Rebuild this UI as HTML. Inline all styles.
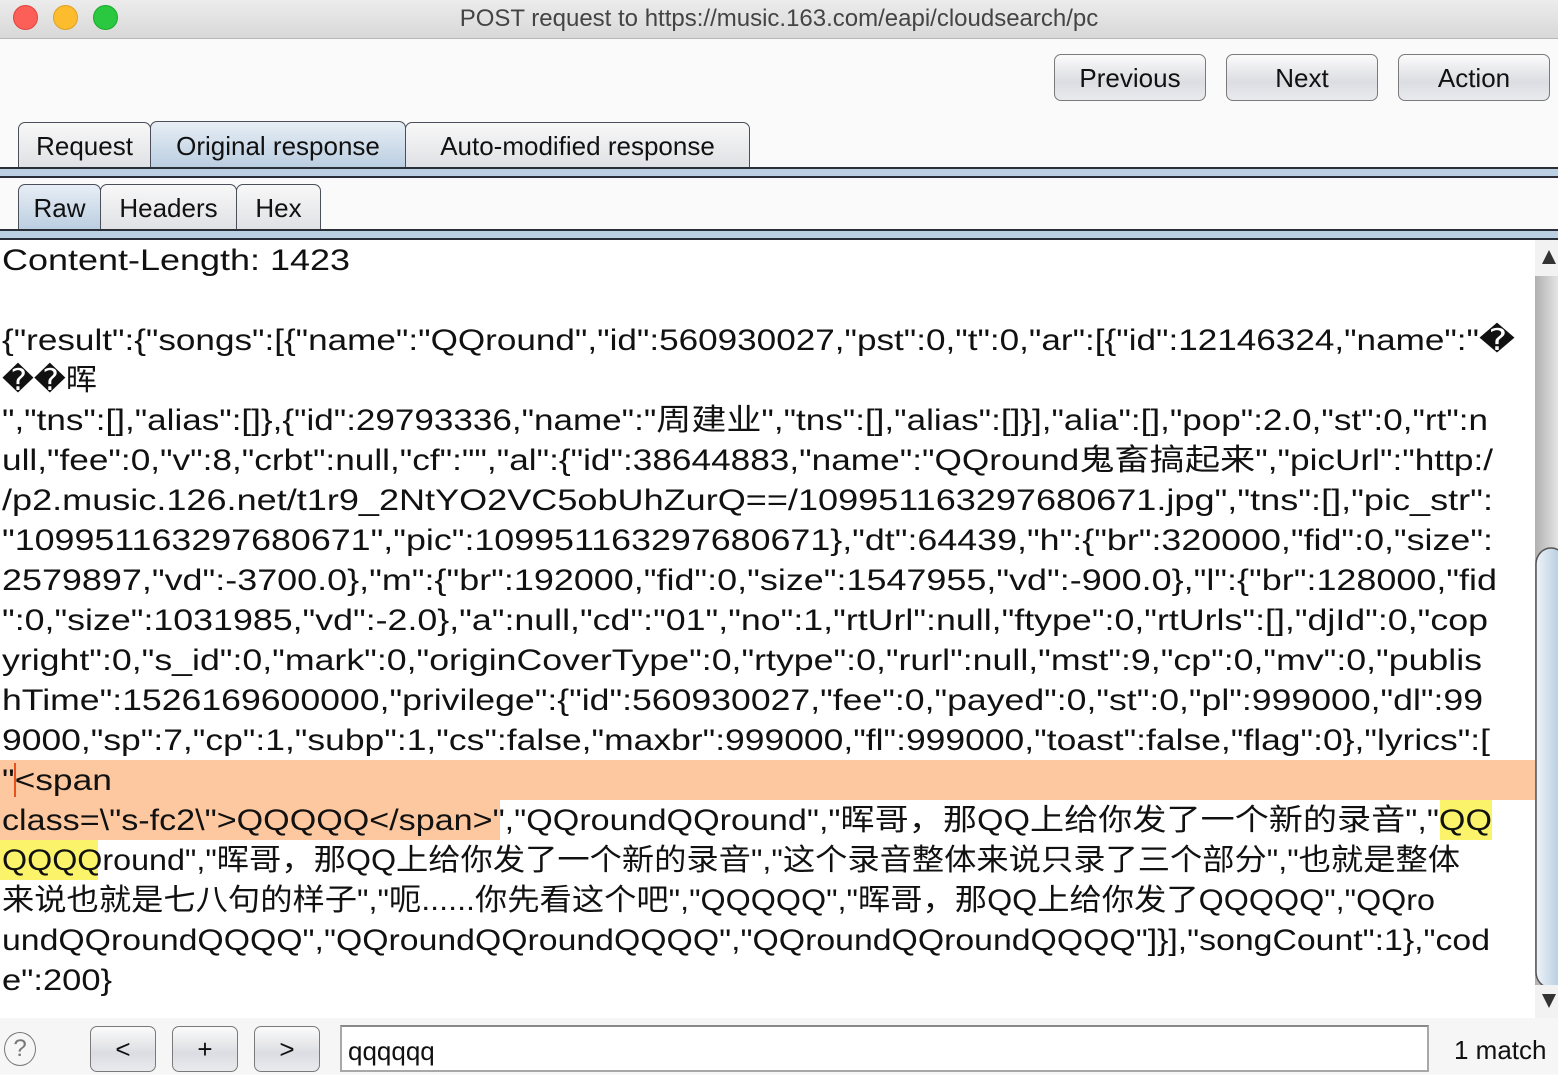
<!DOCTYPE html>
<html><head><meta charset="utf-8"><style>
*{margin:0;padding:0;box-sizing:border-box}
body{width:1558px;height:1074px;overflow:hidden;background:#fafafa;font-family:"Liberation Sans","Noto Sans CJK SC",sans-serif;position:relative}
.title{position:absolute;left:0;top:0;width:1558px;height:39px;background:linear-gradient(#ececec,#d8d8d8);border-bottom:1px solid #b8b8b8;text-align:center;font-size:24px;line-height:38px;color:#444}
.dot{position:absolute;top:5px;width:25px;height:25px;border-radius:50%}
.btn{position:absolute;border:1.5px solid #7a7a7a;border-radius:7px;background:linear-gradient(#fbfbfb,#dcdde2 60%,#e9eaee);font-size:26px;text-align:center;color:#111}
.tab{position:absolute;border:1.5px solid #4a4f5a;border-bottom:none;border-radius:7px 7px 0 0;background:linear-gradient(#f8f8f8,#dfe0e4);font-size:26px;text-align:center;color:#111}
.tab.sel{background:linear-gradient(#e8eef5,#b9cde0)}
.band{position:absolute;left:0;width:1558px;background:#bcd0e4;border-top:2px solid #2a2e36;border-bottom:2px solid #2a2e36}
</style></head><body>
<div class="title">POST request to https://music.163.com/eapi/cloudsearch/pc</div>
<div class="dot" style="left:13px;background:#fc5f57;border:1px solid #e0443e"></div>
<div class="dot" style="left:53px;background:#fdbc2e;border:1px solid #dea123"></div>
<div class="dot" style="left:93px;background:#29c840;border:1px solid #1aab29"></div>

<div class="btn" style="left:1054px;top:54px;width:152px;height:47px;line-height:46px">Previous</div>
<div class="btn" style="left:1226px;top:54px;width:152px;height:47px;line-height:46px">Next</div>
<div class="btn" style="left:1398px;top:54px;width:152px;height:47px;line-height:46px">Action</div>

<div class="tab" style="left:18px;top:122px;width:133px;height:47px;line-height:46px">Request</div>
<div class="tab sel" style="left:150px;top:121px;width:256px;height:48px;line-height:48px">Original response</div>
<div class="tab" style="left:405px;top:122px;width:345px;height:47px;line-height:46px">Auto-modified response</div>
<div class="band" style="top:167px;height:11px"></div>

<div class="tab sel" style="left:18px;top:184px;width:83px;height:47px;line-height:46px">Raw</div>
<div class="tab" style="left:100px;top:184px;width:137px;height:47px;line-height:46px">Headers</div>
<div class="tab" style="left:236px;top:184px;width:85px;height:47px;line-height:46px">Hex</div>
<div class="band" style="top:229px;height:11px"></div>

<div style="position:absolute;left:0;top:240px;width:1535px;height:778px;background:#fff"></div>
<svg style="position:absolute;left:0;top:0" width="1558" height="1074">
<rect x="0" y="760" width="1535" height="40" fill="#fdc8a0"/>
<rect x="0" y="800" width="500" height="40" fill="#fdc8a0"/>
<rect x="1440" y="800" width="52" height="40" fill="#fbf46a"/>
<rect x="0" y="840" width="98" height="40" fill="#fbf46a"/>
<rect x="14" y="763" width="2" height="34" fill="#e8501e"/>
<g font-family="Liberation Sans, Noto Sans CJK SC, sans-serif" font-size="30" fill="#111">
<text x="2" y="270" textLength="348" lengthAdjust="spacingAndGlyphs">Content-Length: 1423</text>
<text x="2" y="350" textLength="1513" lengthAdjust="spacingAndGlyphs">{"result":{"songs":[{"name":"QQround","id":560930027,"pst":0,"t":0,"ar":[{"id":12146324,"name":"�</text>
<text x="2" y="390" textLength="95" lengthAdjust="spacingAndGlyphs">��晖</text>
<text x="2" y="430" textLength="1486" lengthAdjust="spacingAndGlyphs">","tns":[],"alias":[]},{"id":29793336,"name":"周建业","tns":[],"alias":[]}],"alia":[],"pop":2.0,"st":0,"rt":n</text>
<text x="2" y="470" textLength="1491" lengthAdjust="spacingAndGlyphs">ull,"fee":0,"v":8,"crbt":null,"cf":"","al":{"id":38644883,"name":"QQround鬼畜搞起来","picUrl":"http:/</text>
<text x="2" y="510" textLength="1491" lengthAdjust="spacingAndGlyphs">/p2.music.126.net/t1r9_2NtYO2VC5obUhZurQ==/109951163297680671.jpg","tns":[],"pic_str":</text>
<text x="2" y="550" textLength="1491" lengthAdjust="spacingAndGlyphs">"109951163297680671","pic":109951163297680671},"dt":64439,"h":{"br":320000,"fid":0,"size":</text>
<text x="2" y="590" textLength="1495" lengthAdjust="spacingAndGlyphs">2579897,"vd":-3700.0},"m":{"br":192000,"fid":0,"size":1547955,"vd":-900.0},"l":{"br":128000,"fid</text>
<text x="2" y="630" textLength="1486" lengthAdjust="spacingAndGlyphs">":0,"size":1031985,"vd":-2.0},"a":null,"cd":"01","no":1,"rtUrl":null,"ftype":0,"rtUrls":[],"djId":0,"cop</text>
<text x="2" y="670" textLength="1480" lengthAdjust="spacingAndGlyphs">yright":0,"s_id":0,"mark":0,"originCoverType":0,"rtype":0,"rurl":null,"mst":9,"cp":0,"mv":0,"publis</text>
<text x="2" y="710" textLength="1481" lengthAdjust="spacingAndGlyphs">hTime":1526169600000,"privilege":{"id":560930027,"fee":0,"payed":0,"st":0,"pl":999000,"dl":99</text>
<text x="2" y="750" textLength="1488" lengthAdjust="spacingAndGlyphs">9000,"sp":7,"cp":1,"subp":1,"cs":false,"maxbr":999000,"fl":999000,"toast":false,"flag":0},"lyrics":[</text>
<text x="2" y="790" textLength="110" lengthAdjust="spacingAndGlyphs">"&lt;span</text>
<text x="2" y="830" textLength="1490" lengthAdjust="spacingAndGlyphs">class=\"s-fc2\"&gt;QQQQQ&lt;/span&gt;","QQroundQQround","晖哥，那QQ上给你发了一个新的录音","QQ</text>
<text x="2" y="870" textLength="1458" lengthAdjust="spacingAndGlyphs">QQQQround","晖哥，那QQ上给你发了一个新的录音","这个录音整体来说只录了三个部分","也就是整体</text>
<text x="2" y="910" textLength="1433" lengthAdjust="spacingAndGlyphs">来说也就是七八句的样子","呃......你先看这个吧","QQQQQ","晖哥，那QQ上给你发了QQQQQ","QQro</text>
<text x="2" y="950" textLength="1488" lengthAdjust="spacingAndGlyphs">undQQroundQQQQ","QQroundQQroundQQQQ","QQroundQQroundQQQQ"]}],"songCount":1},"cod</text>
<text x="2" y="990" textLength="110" lengthAdjust="spacingAndGlyphs">e":200}</text>
</g>
<defs><linearGradient id="tr" x1="0" x2="1"><stop offset="0" stop-color="#b0b0b0"/><stop offset="1" stop-color="#e4e4e4"/></linearGradient>
<linearGradient id="th" x1="0" x2="1"><stop offset="0" stop-color="#eef3f8"/><stop offset="1" stop-color="#a9c3dc"/></linearGradient></defs>
<rect x="1535" y="240" width="23" height="778" fill="url(#tr)"/>
<rect x="1535" y="240" width="23" height="36" fill="#f2f2f2"/>
<polygon points="1549,250 1556,264 1542,264" fill="#333"/>
<rect x="1536" y="548" width="30" height="440" rx="16" fill="url(#th)" stroke="#555" stroke-width="1.5"/>
<rect x="1535" y="985" width="23" height="33" fill="#f2f2f2"/>
<polygon points="1542,994 1556,994 1549,1008" fill="#333"/>
</svg>

<div style="position:absolute;left:0;top:1018px;width:1558px;height:56px;background:#f6f6f6"></div>
<div style="position:absolute;left:4px;top:1032px;width:32px;height:34px;border:1.5px solid #777;border-radius:50%;font-size:24px;line-height:31px;text-align:center;color:#777">?</div>
<div class="btn" style="left:90px;top:1026px;width:66px;height:46px;line-height:44px;font-size:26px">&lt;</div>
<div class="btn" style="left:172px;top:1026px;width:66px;height:46px;line-height:44px;font-size:26px">+</div>
<div class="btn" style="left:254px;top:1026px;width:66px;height:46px;line-height:44px;font-size:26px">&gt;</div>
<div style="position:absolute;left:340px;top:1025px;width:1089px;height:47px;background:#fff;border:2px solid #a8a8a8;border-top-color:#888;font-size:26px;line-height:48px;padding-left:6px;color:#111">qqqqqq</div>
<div style="position:absolute;left:1454px;top:1030px;font-size:26px;line-height:40px;color:#111">1 match</div>
</body></html>
